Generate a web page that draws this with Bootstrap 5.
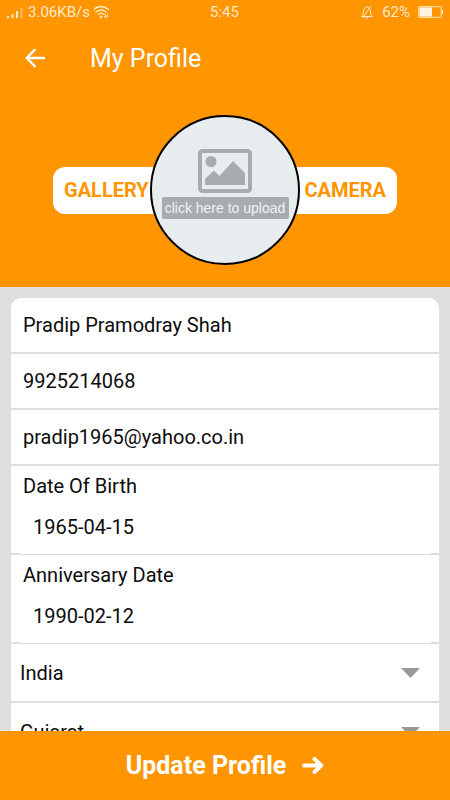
<!DOCTYPE html>
<html lang="en">
<head>
<meta charset="utf-8">
<meta name="viewport" content="width=device-width, initial-scale=1">
<title>My Profile</title>
<link rel="stylesheet" href="https://cdn.jsdelivr.net/npm/bootstrap@5.3.0/dist/css/bootstrap.min.css">
<style>
  :root { --brand: #ff9500; --line: #dedede; }
  body { font-family: Roboto, "Liberation Sans", sans-serif; background: #dfdfdf; color: #0c0c0c; }
  .brand-bg { background: var(--brand); }
  .status { height: 24px; padding: 0 7px 0 6px; font-size: 15px; color: #ffe9cc; }
  .status > div { flex: 1 1 0; gap: 4px; }
  .title-bar { height: 70px; padding-left: 25px; gap: 45px; }
  .title-bar h1 { font-size: 25px; }
  .photo-area { padding: 21px 0 22px; }
  .source-btn { width: 112px; height: 47px; padding: 0 11px; border-radius: 12px; font-size: 20px; font-weight: 700; color: var(--brand); }
  .photo-btn { width: 150px; height: 150px; margin: 0 -15px; border: 2px solid #000; background: #e7ecef; padding: 0 0 12px; z-index: 1; }
  .photo-btn span { background: #a7acae; color: #f1f4f5; font: 14px/22px "Liberation Sans", Arial, sans-serif; width: 127px; border-radius: 2px; white-space: nowrap; }
  .form-area { padding: 11px 11px 0; }
  .form-panel { border-radius: 10px 10px 0 0; }
  .field-row { border-bottom: 2px solid var(--line); font-size: 20px; line-height: 24px; }
  .field-row input, .field-row select { border: 0; background: #fff; color: inherit; width: 100%; outline-offset: -2px; }
  .line-field { padding: 15px 12px; }
  .line-field input { display: block; padding: 0; height: 24px; }
  .date-field label { padding: 8px 12px 0; }
  .date-field .date-box { margin: 0 9px -1px; }
  .date-field input { display: block; padding: 2px 13px 0; height: 56px; }
  .pick-field { height: 59px; padding: 0 19px 0 9px; }
  .pick-field select { appearance: none; padding: 0; height: 40px; }
  .save-btn { height: 69px; font-size: 25px; font-weight: 700; gap: 16px; color: #fff; }
</style>
<script src="https://cdn.jsdelivr.net/npm/bootstrap@5.3.0/dist/js/bootstrap.bundle.min.js"></script>
</head>
<body>
<div class="d-flex flex-column vh-100 overflow-hidden">
  <header class="brand-bg flex-shrink-0">
    <div class="status d-flex align-items-center">
      <div class="d-flex align-items-center">
        <svg width="18" height="14" viewBox="0 0 18 14" fill="#ffe9cc" aria-hidden="true"><path d="M1 11h2v2H1zM5.500 9h2v4h-2zM10 6h2v7h-2z"/><path d="M14.500 2.500h2V13h-2z" opacity=".45"/></svg>
        <span>3.06KB/s</span>
        <svg width="17" height="14" viewBox="0 0 17 14" fill="none" stroke="#ffe9cc" stroke-width="1.300" stroke-linecap="round" aria-hidden="true"><path d="M-.500 4.500Q7 -1.500 14.500 4.500M2 7Q7 3 12 7M4.500 9.300Q7 7.300 9.500 9.300"/><circle cx="7" cy="12" r=".7" fill="#ffe9cc"/><path d="M11.300 9v3.500M10.300 11.500l1 1 1-1M13.300 12V9" stroke-width="1"/></svg>
      </div>
      <span>5:45</span>
      <div class="d-flex align-items-center justify-content-end">
        <svg width="14" height="14" viewBox="0 0 14 14" fill="none" stroke="#ffe9cc" stroke-width="1" stroke-linejoin="round" aria-hidden="true"><path d="M1.500 11.500h11c-1.500-1.500-1.800-2.500-2-5C10.300 3.500 9 2 7 2S3.700 3.500 3.500 6.500c-.2 2.500-.5 3.500-2 5zM5.700 13h2.600M11 .8 2.500 13.300"/></svg>
        <span class="mx-1">62%</span>
        <svg width="25" height="12" viewBox="0 0 25 12" aria-hidden="true"><rect x=".7" y=".7" width="22.600" height="10.600" rx="1.500" fill="none" stroke="#ffd9a6" stroke-width="1.300"/><path d="M1.500 1.500H14v9H1.500z" fill="#fff3e2"/><path d="M24 4h1v4h-1z" fill="#ffe9cc"/></svg>
      </div>
    </div>
    <div class="title-bar d-flex align-items-center">
      <button type="button" class="btn p-0 border-0 d-flex" aria-label="Back">
        <svg width="20" height="20" viewBox="0 0 20 20" fill="none" stroke="#fff" stroke-width="2.500" aria-hidden="true"><path d="M10.500 0 1.800 9l8.700 9M2 9h18"/></svg>
      </button>
      <h1 class="m-0 fw-normal text-white">My Profile</h1>
    </div>
    <div class="photo-area d-flex justify-content-center align-items-center">
      <button type="button" class="source-btn border-0 bg-white text-start">GALLERY</button>
      <button type="button" class="photo-btn rounded-circle position-relative d-flex flex-column align-items-center justify-content-center flex-shrink-0">
        <svg class="mb-1" width="54" height="44" viewBox="0 0 54 44" aria-hidden="true"><rect x="2" y="2" width="50" height="40" rx="2.500" fill="none" stroke="#a7acae" stroke-width="4"/><circle cx="13" cy="12.500" r="5.500" fill="#a7acae"/><path d="M7 36v-6l9-8.500 5.500 5.500L35 12l12 12v12z" fill="#a7acae"/></svg>
        <span>click here to upload</span>
      </button>
      <button type="button" class="source-btn border-0 bg-white text-end">CAMERA</button>
    </div>
  </header>

  <main class="form-area flex-grow-1 overflow-hidden">
    <form id="profile" class="form-panel bg-white overflow-hidden">
      <div class="field-row line-field"><input type="text" aria-label="Name" value="Pradip Pramodray Shah"></div>
      <div class="field-row line-field"><input type="tel" aria-label="Phone" value="9925214068"></div>
      <div class="field-row line-field"><input type="email" aria-label="Email" value="pradip1965@yahoo.co.in"></div>
      <div class="field-row date-field">
        <label class="d-block" for="birth">Date Of Birth</label>
        <div class="date-box"><input type="text" id="birth" value="1965-04-15"></div>
      </div>
      <div class="field-row date-field">
        <label class="d-block" for="anniversary">Anniversary Date</label>
        <div class="date-box"><input type="text" id="anniversary" value="1990-02-12"></div>
      </div>
      <div class="field-row pick-field d-flex align-items-center">
        <select aria-label="Country"><option>India</option></select>
        <svg class="flex-shrink-0" width="19" height="10" viewBox="0 0 19 10" aria-hidden="true"><path d="M0 0h19L9.500 10z" fill="#999"/></svg>
      </div>
      <div class="field-row pick-field d-flex align-items-center">
        <select aria-label="State"><option>Gujarat</option></select>
        <svg class="flex-shrink-0" width="19" height="10" viewBox="0 0 19 10" aria-hidden="true"><path d="M0 0h19L9.500 10z" fill="#999"/></svg>
      </div>
    </form>
  </main>

  <button type="submit" form="profile" class="save-btn brand-bg border-0 w-100 flex-shrink-0 d-flex align-items-center justify-content-center">
    <span>Update Profile</span>
    <svg width="22" height="20" viewBox="0 0 22 20" fill="none" stroke="#fff" stroke-width="4" stroke-linecap="round" stroke-linejoin="round" aria-hidden="true"><path d="M2 9.500h17M12.500 3l6.700 6.500-6.700 6.500"/></svg>
  </button>
</div>
</body>
</html>
